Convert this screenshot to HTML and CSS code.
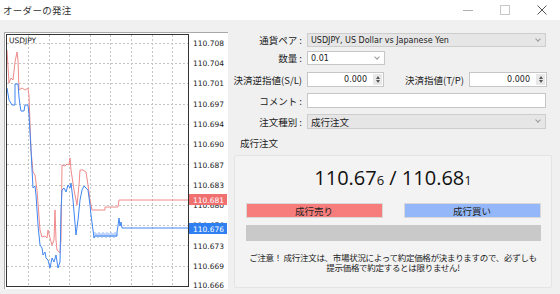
FILE: index.html
```html
<!DOCTYPE html>
<html lang="ja">
<head>
<meta charset="utf-8">
<title>オーダーの発注</title>
<link rel="stylesheet" href="styles.css">
</head>
<body>
<div class="window">
  <div class="titlebar">
    <span class="title">オーダーの発注</span>
    <div class="controls">
      <span class="ctl"><svg width="10" height="10" viewBox="0 0 10 10"><path d="M0 5.5H10" stroke="#b0b0b0" stroke-width="1"/></svg></span>
      <span class="ctl"><svg width="10" height="10" viewBox="0 0 10 10"><rect x="0.5" y="0.5" width="9" height="9" fill="none" stroke="#c8c8c8" stroke-width="1"/></svg></span>
      <span class="ctl"><svg width="10" height="10" viewBox="0 0 10 10"><path d="M0.5 0.5L9.5 9.5M9.5 0.5L0.5 9.5" stroke="#555" stroke-width="1"/></svg></span>
    </div>
  </div>
  <div class="main">
    <div class="chart">
      <svg class="chart-svg" width="224" height="257" viewBox="4 32 224 257">
        <rect x="4" y="32" width="224" height="257" fill="#fff"/>
        <path d="M4 32.5H228M4.5 32V289" stroke="#a8a8a8" stroke-width="1"/>
        <g stroke="#c4c4c4" stroke-width="1" stroke-dasharray="2 2">
          <path d="M28.5 35V286M49.5 35V286M69.5 35V286M90.5 35V286M110.5 35V286M131.5 35V286M152.5 35V286M172.5 35V286"/>
          <path d="M7 43.5H188M7 63.5H188M7 83.5H188M7 104.5H188M7 124.5H188M7 144.5H188M7 164.5H188M7 185.5H188M7 205.5H188M7 225.5H188M7 245.5H188M7 266.5H188"/>
        </g>
        <polyline fill="none" stroke="#f08a8a" stroke-width="1" points="7,50 9,83 11,78 13,80 15,62 17,52 18,60 19,90 22,88 25,90 28,88 29,96 31,150 33,172 35,175 37,190 40,230 42,237 45,236 47,238 48,230 50,238 52,245 54,240 55,210 56,240 57,250 60,253 61,240 62,165 65,166 67,164 69,165 70,158 71,170 74,190 77,205 79,185 80,170 83,170 86,172 88,185 90,200 92,210 105,210 105,207 118,207 119,200 188,200"/>
        <polyline fill="none" stroke="#3f86f2" stroke-width="1" points="7,88 9,100 12,105 15,105 15,84 18,84 19,97 20,105 21,111 24,111 25,105 28,105 29,115 31,150 33,188 35,186 36,195 38,225 40,245 42,248 43,255 45,252 46,258 48,260 50,268 52,258 54,262 56,255 58,268 60,262 61,210 62,190 64,188 66,192 68,185 70,188 71,183 73,200 76,235 78,220 80,200 82,190 84,186 86,188 88,190 90,205 91,215 93,230 94,238"/>
        <polyline fill="none" stroke="#8fb6f6" stroke-width="0.6" points="94,238 95,232 96,237 97,233 98,238 99,232 100,237 101,233 102,238 103,232 104,237 105,233 106,238 107,232 108,237 109,233 110,238 111,232 112,237 113,233 114,238 115,232 116,237 117,233"/>
        <polyline fill="none" stroke="#3f86f2" stroke-width="1" points="94,238 95,236 117,236 117,232 118,226 119,218 120,226 121,222 122,228 188,228"/>
        <rect x="6.5" y="34.5" width="182" height="252" fill="none" stroke="#333" stroke-width="1"/>
        <text x="9" y="43" class="sym">USDJPY</text>
        <g class="axis">
          <text x="193" y="46">110.708</text>
          <text x="193" y="66">110.704</text>
          <text x="193" y="86">110.701</text>
          <text x="193" y="107">110.697</text>
          <text x="193" y="127">110.694</text>
          <text x="193" y="147">110.690</text>
          <text x="193" y="168">110.687</text>
          <text x="193" y="188">110.683</text>
          <text x="193" y="208">110.680</text>
          <text x="193" y="228">110.676</text>
          <text x="193" y="249">110.673</text>
          <text x="193" y="269">110.669</text>
          <text x="193" y="287.5">110.666</text>
        </g>
        <rect x="189" y="194" width="38" height="11" fill="#f07070"/>
        <text x="193" y="203" class="axis-hl">110.681</text>
        <rect x="189" y="223" width="38" height="11" fill="#2f7ff0"/>
        <text x="193" y="232" class="axis-hl">110.676</text>
      </svg>
    </div>
    <div class="panel">
      <div class="row r1">
        <span class="lbl">通貨ペア :</span>
        <div class="field select disabled w-full">USDJPY, US Dollar vs Japanese Yen<span class="chev"></span></div>
      </div>
      <div class="row r2">
        <span class="lbl">数量 :</span>
        <div class="field select w-vol">0.01<span class="chev"></span></div>
      </div>
      <div class="row r3">
        <span class="lbl">決済逆指値(S/L)</span>
        <div class="field spin w-sl"><span class="num">0.000</span><span class="spinner"><i class="up"></i><i class="dn"></i></span></div>
        <span class="lbl2">決済指値(T/P)</span>
        <div class="field spin w-tp"><span class="num">0.000</span><span class="spinner"><i class="up"></i><i class="dn"></i></span></div>
      </div>
      <div class="row r4">
        <span class="lbl">コメント :</span>
        <div class="field w-full"></div>
      </div>
      <div class="row r5">
        <span class="lbl">注文種別 :</span>
        <div class="field select disabled w-full">成行注文<span class="chev"></span></div>
      </div>
      <div class="group-title">成行注文</div>
      <div class="group">
        <div class="price"><span class="big">110.67</span><span class="small">6</span><span class="big"> / 110.68</span><span class="small">1</span></div>
        <div class="buttons">
          <div class="btn sell">成行売り</div>
          <div class="btn buy">成行買い</div>
        </div>
        <div class="bar"></div>
        <p class="notice">ご注意！ 成行注文は、市場状況によって約定価格が決まりますので、必ずしも<br>提示価格で約定するとは限りません!</p>
      </div>
    </div>
  </div>
</div>
</body>
</html>
```

FILE: styles.css
```css
* { box-sizing: border-box; }
html, body { margin: 0; padding: 0; }
body {
  width: 560px;
  height: 294px;
  overflow: hidden;
  background: #f0f0f0;
  font-family: "Noto Sans CJK JP", "Noto Sans", sans-serif;
  color: #1a1a1a;
}
.window { width: 560px; height: 294px; }
.titlebar {
  height: 20px;
  background: #fff;
  display: flex;
  align-items: center;
  justify-content: space-between;
}
.title {
  font-size: 9.5px;
  color: #333;
  padding-left: 3px;
  letter-spacing: 0.3px;
}
.controls { display: flex; height: 20px; align-items: center; padding-right: 0; }
.ctl { width: 37px; display: flex; justify-content: center; align-items: center; height: 20px; }
.ctl svg { display: block; }

.main {
  display: flex;
  padding: 12px 0 0 4px;
}
.chart { width: 224px; height: 257px; }
.chart-svg { display: block; }
.chart-svg text { font-family: "DejaVu Sans", "Liberation Sans", sans-serif; font-size: 7.5px; fill: #222; }
.chart-svg .sym { font-size: 7.5px; }
.chart-svg .axis-hl { fill: #fff; }

.panel {
  margin-left: 2px;
  width: 326px;
  padding-top: 1px;
  display: flex;
  flex-direction: column;
}
.row { display: flex; align-items: center; height: 15px; }
.r1 { height: 14px; }
.r2 { height: 14px; margin-top: 4px; }
.r3 { margin-top: 7px; }
.r4 { margin-top: 6px; }
.r5 { margin-top: 6px; }
.lbl {
  width: 72px;
  text-align: right;
  font-size: 9.5px;
  color: #222;
  white-space: nowrap;
  margin-right: 5px;
}
.lbl2 {
  font-size: 9.5px;
  color: #222;
  margin-left: 21px;
  width: 64px;
  white-space: nowrap;
}
.field {
  height: 100%;
  background: #fff;
  border: 1px solid #c6c6c6;
  font-family: "DejaVu Sans", "Noto Sans CJK JP", sans-serif;
  font-size: 8px;
  color: #222;
  display: flex;
  align-items: center;
  padding-left: 3px;
  position: relative;
  white-space: nowrap;
}
.select.disabled { background: #e6e6e6; border-color: #cdcdcd; }
.select .chev {
  position: absolute;
  right: 5px;
  top: 3px;
  width: 4px;
  height: 4px;
  border-right: 1px solid #9a9a9a;
  border-bottom: 1px solid #9a9a9a;
  transform: rotate(45deg);
}
.r5 .field { font-family: "Noto Sans CJK JP", sans-serif; font-size: 9.5px; }
.w-full { width: 239px; }
.w-vol { width: 78px; }
.w-sl { width: 77px; }
.w-tp { width: 78px; }
.spin { justify-content: flex-end; padding-right: 1px; }
.spin .num { margin-right: 6px; }
.spinner {
  width: 9px;
  height: 11px;
  background: #e8e8e8;
  display: flex;
  flex-direction: column;
  align-items: center;
  justify-content: center;
  gap: 1px;
}
.spinner i { display: block; width: 0; height: 0; border-left: 2.5px solid transparent; border-right: 2.5px solid transparent; }
.spinner .up { border-bottom: 3px solid #555; }
.spinner .dn { border-top: 3px solid #555; }

.group-title {
  margin-top: 8px;
  margin-left: 10px;
  font-size: 9.5px;
  color: #222;
  height: 12px;
  line-height: 12px;
}
.group {
  margin-top: 6px;
  margin-left: 4px;
  width: 318px;
  height: 133px;
  background: #f3f3f3;
  border: 1px solid #e4e4e4;
  border-radius: 2px;
  display: flex;
  flex-direction: column;
  align-items: center;
}
.price {
  margin-top: 8px;
  height: 22px;
  display: flex;
  align-items: baseline;
  font-family: "Open Sans", "Noto Sans", sans-serif;
  color: #111;
  white-space: pre;
}
.price .big { font-size: 20px; }
.price .small { font-size: 13px; }
.buttons {
  margin-top: 17px;
  width: 295px;
  display: flex;
  justify-content: space-between;
}
.btn {
  width: 137px;
  height: 15px;
  font-size: 9.5px;
  display: flex;
  align-items: center;
  justify-content: center;
  color: #222;
  border: 1px solid #d8d8d8;
}
.btn.sell { background: #f77c7c; }
.btn.buy { background: #93b7f9; }
.bar {
  margin-top: 7px;
  width: 295px;
  height: 16px;
  background: #c9c9c9;
}
.notice {
  margin: 11px 0 0;
  font-size: 8.5px;
  line-height: 10px;
  letter-spacing: -0.3px;
  text-align: center;
  color: #222;
  white-space: nowrap;
}
```
